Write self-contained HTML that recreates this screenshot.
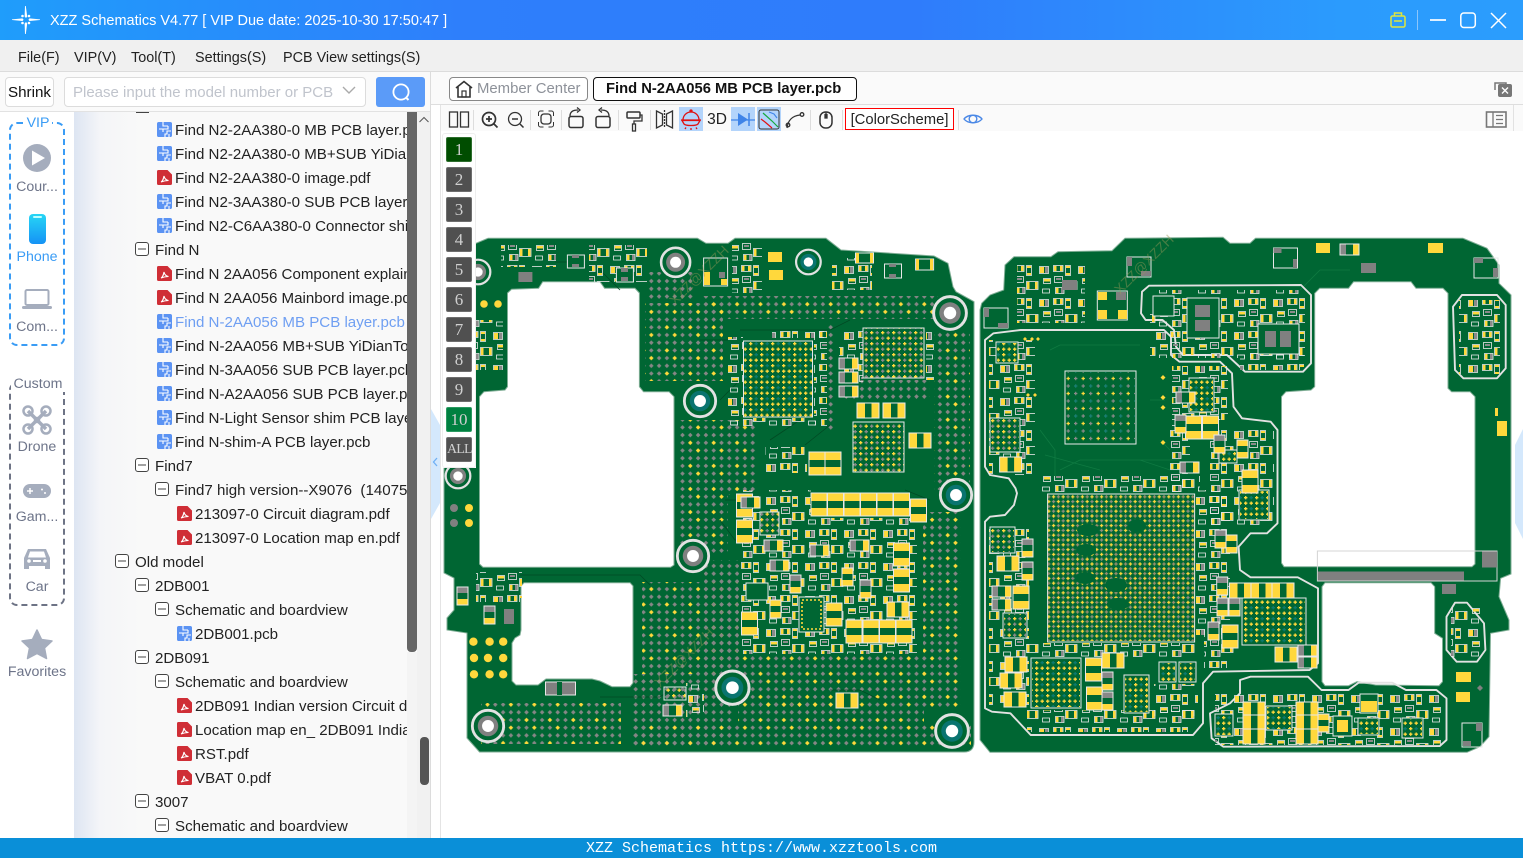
<!DOCTYPE html>
<html><head><meta charset="utf-8"><title>XZZ Schematics</title>
<style>
html,body{margin:0;padding:0;width:1523px;height:858px;overflow:hidden;background:#fff;font-family:"Liberation Sans","Noto Sans CJK SC",sans-serif;color:#222}
div{box-sizing:border-box}
.a{position:absolute}
#title{left:0;top:0;width:1523px;height:40px;background:linear-gradient(90deg,#1f9dfb 0,#2e7ffb 30%,#2f7cfb 60%,#2b9bfd 88%,#2b9dfd 100%);color:#fff;font-size:14.5px;line-height:42px;padding-left:50px}
#menu{left:0;top:40px;width:1523px;height:32px;background:#f0f0f0;border-bottom:1px solid #dcdcdc}
#menu span{position:absolute;top:0;line-height:36px;font-size:14.4px;color:#222}
#left{left:0;top:72px;width:431px;height:40px;background:#fafafa;border-bottom:1px solid #e2e2e2;border-right:1px solid #e0e0e0}
.btn{background:#fff;border:1px solid #dcdcdc;border-radius:4px}
#tree{left:0;top:112px;width:407px;height:726px;overflow:hidden;background:linear-gradient(90deg,#fff 0,#fff 74px,#dde5f2 74px,#f4f5f8 100px,#f9f9f9 140px)}
.r{position:absolute;height:24px;line-height:26px;white-space:nowrap;font-size:15.1px;color:#222}
.r svg{position:absolute;left:0;top:5px;width:15px;height:15px}
#side{left:0;top:112px;width:74px;height:726px;background:#fff}
.lab{position:absolute;left:0;width:74px;text-align:center;font-size:14.2px;line-height:20px;color:#6d7489}
#stat{left:0;top:838px;width:1523px;height:20px;background:#0a8fd8;color:#fff;font:15px/22px "Liberation Mono",monospace;text-align:center}
.lay{position:absolute;left:446px;width:26px;height:25px;background:#505050;border:1px solid #6e6e6e;border-radius:2px;color:#cfcfcf;font:17px/24px "Liberation Serif",serif;text-align:center}
.sep{position:absolute;top:110px;width:1px;height:20px;background:#ddd}
</style></head><body>

<svg class="a" style="left:0;top:0" width="1523" height="858" viewBox="0 0 1523 858">
<defs>
<pattern id="vg" width="7.8" height="7.7" patternUnits="userSpaceOnUse"><path d="M3.9 1.6l2.3 2.3-2.3 2.3-2.3-2.3z" fill="#868686"/></pattern>
<pattern id="vm" width="23.4" height="23.1" patternUnits="userSpaceOnUse"><g fill="#868686"><path d="M3.9 1.6l2.3 2.3-2.3 2.3-2.3-2.3z"/><path d="M19.5 1.6l2.3 2.3-2.3 2.3-2.3-2.3z"/><path d="M11.7 9.3l2.3 2.3-2.3 2.3-2.3-2.3z"/><path d="M3.9 17l2.3 2.3-2.3 2.3-2.3-2.3z"/><path d="M11.7 17l2.3 2.3-2.3 2.3-2.3-2.3z"/><path d="M3.9 9.300l2.3 2.3-2.3 2.3-2.3-2.3z"/><path d="M19.5 17l2.3 2.3-2.3 2.3-2.3-2.3z"/></g><g fill="#ffd83c"><path d="M11.7 1.6l2.3 2.3-2.3 2.3-2.3-2.3z"/><path d="M19.5 9.3l2.3 2.3-2.3 2.3-2.3-2.3z"/></g></pattern>
<pattern id="vy" width="15.6" height="7.7" patternUnits="userSpaceOnUse"><path d="M3.9 1.6l2.3 2.3-2.3 2.3-2.3-2.3z" fill="#ffd83c"/><path d="M11.7 1.6l2.3 2.3-2.3 2.3-2.3-2.3z" fill="#868686"/></pattern>
<pattern id="bga" width="11" height="11" patternUnits="userSpaceOnUse"><g stroke-width="1.3" fill="none"><path d="M1 2.7h3.4M2.7 1v3.4M6.5 8.2h3.4M8.2 6.5v3.4" stroke="#ffd83c"/><path d="M6.5 2.7h3.4M8.2 1v3.4" stroke="#0b7a70"/><path d="M1 8.2h3.4M2.7 6.5v3.4" stroke="#ffd83c"/></g></pattern>
<pattern id="bgb" width="11" height="11" patternUnits="userSpaceOnUse"><g stroke-width="1.3" fill="none"><path d="M1 2.7h3.4M2.7 1v3.4M6.5 8.2h3.4M8.2 6.5v3.4" stroke="#ffd83c"/><path d="M6.5 2.7h3.4M8.2 1v3.4" stroke="#8a8a8a"/><path d="M1 8.2h3.4M2.7 6.5v3.4" stroke="#8a8a8a"/></g></pattern>
<pattern id="bgm" width="9.6" height="9.6" patternUnits="userSpaceOnUse"><g stroke-width="1.3" fill="none"><path d="M.7 2.4h3.4M2.4.7v3.4" stroke="#ffd83c"/><path d="M5.5 2.4h3.4M7.2.7v3.4" stroke="#8f8f80"/><path d="M.7 7.2h3.4M2.4 5.5v3.4" stroke="#9a8f70"/><path d="M5.5 7.2h3.4M7.2 5.5v3.4" stroke="#ffd83c"/></g></pattern>
<pattern id="bgs" width="15" height="15" patternUnits="userSpaceOnUse"><g stroke-width="1.2" fill="none"><path d="M1.5 3.5h3.4M3.2 1.8v3.4" stroke="#ffd83c"/><path d="M9 3.5h3.4M10.7 1.8v3.4" stroke="#8a8a8a"/><path d="M1.5 11h3.4M3.2 9.3v3.4" stroke="#8a8a8a"/><path d="M9 11h3.4M10.7 9.3v3.4" stroke="#1a7f74"/></g></pattern>
<pattern id="smd" width="39" height="33" patternUnits="userSpaceOnUse">
<g fill="#ffd83c"><rect x="1" y="2" width="2.5" height="5"/><rect x="7" y="2" width="2.5" height="5"/><rect x="13" y="2" width="4" height="2"/><rect x="13" y="9" width="4" height="2"/><rect x="26" y="3" width="4" height="6"/><rect x="13" y="18" width="2.500" height="7"/><rect x="21" y="18" width="2.500" height="7"/><rect x="30" y="15" width="6" height="2.500"/><rect x="3" y="24" width="2.500" height="5"/></g>
<g fill="#8a8a8a"><rect x="31" y="3" width="3" height="6"/><rect x="8" y="24" width="2.500" height="5"/><rect x="3" y="14" width="5" height="2"/></g>
<g fill="none" stroke="#e8e8e8" stroke-width=".8"><rect x=".5" y="1.500" width="9.500" height="6"/><rect x="12.500" y="1.500" width="5" height="10"/><rect x="25.500" y="2.500" width="9" height="7"/><rect x="1.500" y="12.500" width="8" height="6"/><rect x="12.500" y="17.500" width="11.500" height="8"/><rect x="29.500" y="14.500" width="7" height="5"/><rect x="2.500" y="23.500" width="8.500" height="6"/><rect x="28.500" y="25" width="7" height="4"/></g>
</pattern>
<g id="cV"><rect width="16" height="23" fill="#ffd83c"/><rect y="8" width="16" height="7" fill="#063"/><rect width="16" height="23" fill="none" stroke="#e8e8e8"/></g>
<g id="cH"><rect width="22" height="15" fill="#ffd83c"/><rect x="8" width="6.5" height="15" fill="#063"/><rect width="22" height="15" fill="none" stroke="#e8e8e8"/></g>
<g id="gH"><rect width="19" height="11" fill="#063"/><rect width="6" height="11" fill="#888"/><rect x="13" width="6" height="11" fill="#ffd83c"/><rect width="19" height="11" fill="none" stroke="#e8e8e8"/></g>
<g id="gV"><rect width="11" height="18" fill="#063"/><rect width="11" height="6" fill="#888"/><rect y="12" width="11" height="6" fill="#ffd83c"/><rect width="11" height="18" fill="none" stroke="#e8e8e8"/></g>
<g id="yV"><rect width="11" height="18" fill="#ffd83c"/><rect y="6" width="11" height="6" fill="#063"/><rect width="11" height="18" fill="none" stroke="#e8e8e8"/></g>
<g id="hG"><circle r="14.5" fill="#063" stroke="#e2e2e2" stroke-width="2.6"/><circle r="9.5" fill="#808080"/><circle r="5.5" fill="#fff"/></g>
<g id="hT"><circle r="14.5" fill="#063" stroke="#e2e2e2" stroke-width="2.6"/><circle r="9.5" fill="#0a7470"/><circle r="5.5" fill="#fff"/></g>
<g id="ol"><rect width="24" height="20" fill="none" stroke="#e8e8e8"/></g>
<clipPath id="c1"><rect x="476" y="130" width="500" height="340"/><rect x="440" y="468" width="540" height="300"/></clipPath>
</defs>

<g clip-path="url(#c1)">
<path fill="#063" stroke="#7fae95" stroke-width="1" fill-rule="evenodd" d="M444 260Q446 250 476 243.3L488 238.3H697.5L706 243.3H728L735 238.3H826L841 250L934 256L948 263.3L953 286.7L956 291.7L974 301.7V742Q974 752 964 752H479.5L467 738V633L447 630V618L454 610V578L444 573Z
M507.5 293L511.6 289.3L538.6 288.3L542.7 281.7H600L604.6 288.3H635L639.4 293V386.7L643.5 391.7H669L674 396.7V565L670.5 567.3H483L479.5 564V396.7L484 391.7L505 390L507.5 386.7Z
M524 582.7H630L633 586V683L630 686.7H612L600 681L592 679H546L538 685H516L512 681V643L515 638L520 635L521 630V586Z"/>
</g>
<g>
<rect x="645" y="303" width="78" height="78" fill="url(#vm)"/>
<rect x="648" y="272" width="46" height="30" fill="url(#vg)"/>
<rect x="701" y="296" width="237" height="23" fill="url(#vm)"/>
<rect x="934" y="330" width="36" height="160" fill="url(#vm)"/>
<rect x="923" y="512" width="38" height="195" fill="url(#vm)"/>
<rect x="826" y="322" width="8" height="110" fill="url(#vg)"/>
<rect x="680" y="420" width="78" height="75" fill="url(#vm)"/>
<rect x="680" y="493" width="48" height="60" fill="url(#vm)"/>
<rect x="642" y="582" width="96" height="92" fill="url(#vm)"/>
<rect x="633" y="674" width="100" height="72" fill="url(#vg)"/>
<rect x="704" y="560" width="35" height="120" fill="url(#vg)"/>
<rect x="738" y="655" width="186" height="68" fill="url(#vm)"/>
<rect x="633" y="723" width="338" height="23" fill="url(#vm)"/>
<rect x="481" y="703" width="140" height="41" fill="url(#vm)"/>
<rect x="840" y="380" width="90" height="20" fill="url(#vg)"/>
<rect x="760" y="700" width="100" height="8" fill="url(#vy)"/>
</g>
<g fill="none" stroke="#004a24" stroke-width=".8"><path d="M520 575H640L650 585M600 697H660L670 690M720 520L735 540H745M725 500H736M770 440L800 420M805 445L830 425M600 270L620 290M555 262H570M700 340H728M720 400L740 380M740 330H830L850 320M905 490L930 500M905 640V600M830 690H860L880 700M500 650L510 660"/></g>
<use href="#hG" transform="translate(675.6 262.3)"/>
<use href="#hT" transform="translate(808.4 262) scale(.85)"/>
<use href="#hG" transform="translate(950 313) scale(1.13)"/>
<use href="#hT" transform="translate(700 401) scale(1.08)"/>
<use href="#hG" transform="translate(478 272) scale(.85)"/>
<use href="#hG" transform="translate(458 476) scale(.85)"/>
<use href="#hG" transform="translate(693 556) scale(1.08)"/>
<use href="#hT" transform="translate(956 495) scale(1.08)"/>
<use href="#hT" transform="translate(732.4 687.7) scale(1.15)"/>
<use href="#hG" transform="translate(488 726) scale(1.08)"/>
<use href="#hT" transform="translate(952 731) scale(1.13)"/>
<g fill="#ffd83c"><circle cx="484" cy="304" r="3.8"/><circle cx="498" cy="304" r="3.8"/><circle cx="469" cy="508" r="4"/><circle cx="469" cy="523" r="4"/><circle cx="473.4" cy="641.7" r="4.2"/><circle cx="489.6" cy="641.7" r="4.2"/><circle cx="503.2" cy="641.7" r="4.2"/><circle cx="474" cy="658" r="4.2"/><circle cx="488" cy="658" r="4.2"/><circle cx="503.2" cy="658" r="4.2"/><circle cx="474" cy="674.3" r="4.2"/><circle cx="489.6" cy="674.3" r="4.2"/><circle cx="503.2" cy="674.3" r="4.2"/></g>
<circle cx="454" cy="508" r="4" fill="#808080"/><circle cx="454" cy="523" r="4" fill="#808080"/>
<g>
<rect x="501" y="245" width="55" height="22" fill="url(#smd)"/>
<rect x="589" y="245" width="58" height="37" fill="url(#smd)"/>
<rect x="732" y="243" width="30" height="50" fill="url(#smd)"/>
<rect x="832" y="258" width="40" height="32" fill="url(#smd)"/>
<rect x="476" y="320" width="27" height="50" fill="url(#smd)"/>
<rect x="728" y="337" width="15" height="92" fill="url(#smd)"/>
<rect x="814" y="330" width="13" height="100" fill="url(#smd)"/>
<rect x="731" y="418" width="86" height="11" fill="url(#smd)"/>
<rect x="772" y="328" width="52" height="10" fill="url(#smd)"/>
<rect x="839" y="327" width="24" height="56" fill="url(#smd)"/>
<rect x="926" y="328" width="9" height="52" fill="url(#smd)"/>
<rect x="765" y="447" width="42" height="26" fill="url(#smd)"/>
<rect x="741" y="518" width="176" height="136" fill="url(#smd)"/>
<rect x="741" y="490" width="70" height="30" fill="url(#smd)"/>
<rect x="476" y="572" width="46" height="30" fill="url(#smd)"/>
<rect x="686" y="683" width="18" height="34" fill="url(#smd)"/>
<rect x="743.5" y="341" width="69" height="76" fill="#063"/><rect x="743.5" y="341" width="69" height="76" fill="url(#bga)" stroke="#e8e8e8"/>
<rect x="863" y="328" width="61" height="50" fill="#063"/><rect x="863" y="328" width="61" height="50" fill="url(#bgb)" stroke="#e8e8e8"/>
<rect x="853" y="422" width="51" height="50" fill="#063"/><rect x="853" y="422" width="51" height="50" fill="url(#bgb)" stroke="#e8e8e8"/>
<rect x="760" y="512" width="19" height="23" fill="#063"/><rect x="760" y="512" width="19" height="23" fill="url(#bgb)" stroke="#e8e8e8"/>
<rect x="799" y="597" width="25" height="35" fill="#063" stroke="#e8e8e8"/><rect x="802" y="600" width="19" height="29" fill="none" stroke="#ffd83c" stroke-width="1.6" stroke-dasharray="2 2"/>
<rect x="664" y="687" width="22" height="13" fill="url(#bgb)" stroke="#e8e8e8"/>
<rect x="746" y="583" width="22" height="17" fill="#063" stroke="#e8e8e8"/>
</g>
<g>
<use href="#cV" x="811" y="493"/><use href="#cV" x="827.5" y="493"/><use href="#cV" x="844" y="493"/><use href="#cV" x="860.5" y="493"/><use href="#cV" x="877" y="493"/><use href="#cV" x="893.5" y="493"/><use href="#cV" x="910.5" y="499"/>
<use href="#cV" x="736.5" y="494"/><use href="#cV" x="736.5" y="520"/>
<use href="#cV" x="893.5" y="543"/><use href="#cV" x="893.5" y="569"/>
<use href="#cV" x="846" y="620"/><use href="#cV" x="863" y="620"/><use href="#cV" x="879.5" y="620"/><use href="#cV" x="896" y="620"/>
<use href="#cV" x="741.5" y="612"/><use href="#cV" x="826" y="603"/>
<use href="#cH" x="887" y="602"/><use href="#cH" x="836" y="693"/>
<use href="#cH" x="857" y="403"/><use href="#cH" x="883" y="403"/><use href="#cH" x="909" y="433"/>
<use href="#cV" x="809" y="452"/><use href="#cV" x="825" y="452"/>
<use href="#gH" x="839" y="358"/><use href="#gH" x="839" y="372"/><use href="#gH" x="839" y="386"/>
<use href="#gH" x="663" y="705"/><use href="#gH" x="741" y="497"/>
<use href="#gH" x="764" y="540"/><use href="#gH" x="770" y="560"/><use href="#gH" x="810" y="545"/><use href="#gH" x="850" y="540"/><use href="#gV" x="790" y="575"/><use href="#gV" x="860" y="580"/><use href="#yV" x="770" y="600"/><use href="#yV" x="842" y="568"/>
<use href="#gV" x="484" y="606"/><use href="#gV" x="457" y="587"/>
</g>
<rect x="545.5" y="682" width="30" height="13" fill="#808080" stroke="#e8e8e8"/><rect x="557" y="682" width="5" height="13" fill="#063"/>
<rect x="504" y="609" width="10" height="15" fill="#808080"/>
<rect x="518.4" y="272" width="14" height="10" fill="#808080"/>
<rect x="768" y="252" width="14" height="10" fill="#ffd83c"/><rect x="769" y="270" width="14" height="10" fill="#ffd83c"/>
<g fill="#063" stroke="#e8e8e8"><rect x="703.6" y="258" width="24" height="28"/><rect x="855.5" y="253" width="18" height="10"/><rect x="915.6" y="259" width="18" height="11"/><rect x="884.5" y="264" width="17" height="14"/><rect x="616.4" y="268" width="17" height="14"/><rect x="567.4" y="255" width="17" height="13"/></g>
<g fill="#ffd83c"><rect x="704" y="272" width="6" height="13"/><rect x="721" y="279" width="6" height="6"/><rect x="856" y="253" width="3" height="10"/><rect x="870" y="253" width="3" height="10"/><rect x="916" y="259" width="3" height="11"/><rect x="930" y="259" width="3" height="11"/></g>
<g fill="#808080"><rect x="719" y="272" width="6" height="6"/><rect x="889" y="264" width="7" height="3"/><rect x="889" y="274" width="7" height="4"/><rect x="621" y="268" width="7" height="4"/><rect x="621" y="277" width="7" height="4"/><rect x="572" y="255" width="7" height="3"/><rect x="572" y="264" width="7" height="3"/></g>

<path fill="#063" stroke="#7fae95" stroke-width="1" fill-rule="evenodd" d="M980 310L981.7 303.3L990 295L1003.7 290L1005 265L1014 256.7H1051L1058 251.7L1112 250.7L1125 238.3L1223 237.3L1230 243.3H1250L1255.5 238.3H1463L1487 248.3L1499 265V283.3L1511 295V574L1500.6 578.3L1499 596.7L1509 620V630L1490.5 633.3L1489 736.7L1480 746.7L1467 752.3H990L980 740Z
M1314.7 293.3L1319.7 288.3H1348.5L1353.6 281.7H1411L1416 288.3H1443L1448 293.3V388.3L1451.6 391.7H1470L1475 396.7V564L1472 566.7H1284L1281.5 563V396.7L1286 391.7L1311 390L1314.7 386.7Z
M1325 582.7H1431L1434.7 586.7V633.3L1442.5 638.3V681.7L1439 685.7L1375.5 685L1357 681.7L1348.5 685.7H1325L1322 681.7V586.7Z"/>
<g fill="none" stroke="#0f7a42" stroke-width=".8"><path d="M1050 350L1060 345H1140M1040 430L1055 450V480M1140 460L1170 470H1200M1060 470L1080 460H1180M1045 455L1100 470M1300 290L1320 270H1350M1150 400H1165M1160 440L1170 450"/></g>
<g fill="none" stroke="#e2e2e2" stroke-width="1.9" stroke-linejoin="round">
<path d="M985 340V466.7L990 475L1008.7 478.3L1015.5 488.3L1017 493.3L1014 505L1005 515L990 516.7L985 521.7V708.3L992 711.7L1010.4 713.3L1030.7 735H1193L1203 723.3V683.3L1213 671.7L1309.6 670L1318 663.3V588.3L1297.8 577.3H1250.5L1240 570L1238.6 546.7L1250.5 533.3H1267L1277.5 523.3V430L1270.7 421.7L1242 418.3L1233.5 406.7L1232 373.3L1220 361.7H1179.5L1171 355V336.7L1164 330H1020.6L993.5 333.3Z"/>
<path d="M1142 291.7L1149 285.7L1301 285L1311 295V363.3L1303 371.7H1245L1227 355H1183L1176 346.7L1174 330L1162.5 320H1145.6L1141 313.3Z"/>
<path d="M1240 680L1250.5 676.7H1308L1321.5 690H1348.5L1358.6 682.7H1392.4L1406 690H1436.4L1446.5 698.3V740L1439.8 746L1223.4 746.7L1211.6 738.3L1210 713.3L1230 703.3L1240 693.3Z"/>
<path d="M1453 306.7L1462 295H1497L1505.7 305V368.3L1497 378.3H1463.4L1455 370Z"/>
<path d="M1446.5 616.7L1455 602.7H1467L1484 623.3L1485.4 650L1477 661.7H1456.7L1446.5 650Z"/>
</g>
<g>
<rect x="1017" y="265" width="68" height="58" fill="url(#smd)"/>
<rect x="1150" y="290" width="155" height="68" fill="url(#smd)"/>
<rect x="1240" y="350" width="64" height="20" fill="url(#smd)"/>
<rect x="1459" y="300" width="41" height="74" fill="url(#smd)"/>
<rect x="989" y="340" width="46" height="135" fill="url(#smd)"/>
<rect x="1172" y="366" width="56" height="54" fill="url(#smd)"/>
<rect x="1210" y="428" width="64" height="100" fill="url(#smd)"/>
<rect x="1040" y="476" width="160" height="17" fill="url(#smd)"/>
<rect x="1170" y="425" width="20" height="70" fill="url(#smd)"/>
<rect x="989" y="525" width="40" height="180" fill="url(#smd)"/>
<rect x="1027" y="643" width="170" height="15" fill="url(#smd)"/>
<rect x="1027" y="710" width="168" height="22" fill="url(#smd)"/>
<rect x="1154" y="684" width="44" height="32" fill="url(#smd)"/>
<rect x="1196" y="490" width="34" height="145" fill="url(#smd)"/>
<rect x="1204" y="628" width="30" height="40" fill="url(#smd)"/>
<rect x="1215" y="693" width="226" height="52" fill="url(#smd)"/>
<rect x="1451" y="608" width="30" height="50" fill="url(#smd)"/>
</g>
<g fill="#063" stroke="#e8e8e8">
<rect x="1047.6" y="494" width="147" height="148"/>
<rect x="1065" y="371" width="71" height="73"/>
<rect x="996" y="342" width="22" height="21"/><rect x="990" y="418" width="30" height="34"/>
<rect x="1189" y="378" width="25" height="34"/><rect x="1219" y="450" width="18" height="13"/><rect x="1239" y="490" width="30" height="30"/>
<rect x="990" y="527" width="25" height="26"/><rect x="1003" y="613" width="24" height="25"/><rect x="1031" y="658" width="50" height="50"/><rect x="1124" y="675" width="25" height="38"/>
<rect x="1159" y="662" width="17" height="20"/><rect x="1179" y="662" width="17" height="20"/><rect x="1242" y="598" width="64" height="47"/>
<rect x="1266" y="706" width="26" height="24"/><rect x="1358" y="718" width="21" height="17"/><rect x="1402" y="718" width="21" height="20"/><rect x="1215" y="714" width="18" height="22"/>
<rect x="1187" y="298" width="32" height="40"/><rect x="1258" y="324" width="41" height="30"/><rect x="1153" y="296" width="21" height="20"/>
</g>
<rect x="1048" y="494" width="146" height="147" fill="url(#bgm)"/>
<g fill="#063"><ellipse cx="1088" cy="530" rx="11" ry="6"/><ellipse cx="1137" cy="526" rx="9" ry="7"/><ellipse cx="1086" cy="550" rx="10" ry="6"/><ellipse cx="1116" cy="585" rx="11" ry="7"/><ellipse cx="1118" cy="604" rx="11" ry="6"/><ellipse cx="1085" cy="578" rx="10" ry="6"/></g>
<g><rect x="1066" y="372" width="69" height="71" fill="url(#bgs)"/>
<rect x="997" y="343" width="20" height="19" fill="url(#bga)"/><rect x="991" y="419" width="28" height="32" fill="url(#bgb)"/><rect x="1190" y="379" width="23" height="32" fill="url(#bga)"/><rect x="1220" y="451" width="16" height="11" fill="url(#bga)"/><rect x="1240" y="491" width="28" height="28" fill="url(#bga)"/>
<rect x="991" y="528" width="23" height="24" fill="url(#bgb)"/><rect x="1004" y="614" width="22" height="23" fill="url(#bgb)"/><rect x="1032" y="659" width="48" height="48" fill="url(#bga)"/><rect x="1125" y="676" width="23" height="36" fill="url(#bga)"/>
<rect x="1160" y="663" width="15" height="18" fill="url(#bga)"/><rect x="1180" y="663" width="15" height="18" fill="url(#bga)"/><rect x="1243" y="599" width="62" height="45" fill="url(#bga)"/>
<rect x="1267" y="707" width="24" height="22" fill="url(#bga)"/><rect x="1359" y="719" width="19" height="15" fill="url(#bga)"/><rect x="1403" y="719" width="19" height="18" fill="url(#bga)"/><rect x="1216" y="715" width="16" height="20" fill="url(#bga)"/></g>
<g fill="#808080"><rect x="1195" y="305" width="15" height="12"/><rect x="1195" y="320" width="15" height="11"/><rect x="1265" y="331" width="11" height="16"/><rect x="1280" y="331" width="11" height="16"/><rect x="1062" y="280" width="15" height="10"/><rect x="1361" y="263" width="15" height="10"/><rect x="1442" y="584" width="14" height="10"/></g>
<g fill="#ffd83c"><rect x="1316" y="243" width="14" height="10"/><rect x="1428" y="243" width="15" height="10"/><rect x="1456" y="672" width="15" height="10"/><rect x="1456" y="692" width="14" height="10"/><rect x="1497" y="421" width="10" height="15"/><rect x="1495" y="408" width="3" height="8"/></g>
<use href="#ol" x="1273.5" y="248"/><use href="#ol" x="1474" y="258"/><use href="#ol" x="1127" y="257"/><use href="#ol" x="984" y="308"/>
<g fill="#808080"><rect x="1273.5" y="248" width="8" height="5"/><rect x="1293" y="259" width="4" height="9"/><rect x="1474" y="258" width="9" height="5"/><rect x="1493" y="268" width="5" height="9"/><rect x="1127" y="257" width="5" height="9"/><rect x="1141" y="271" width="10" height="5"/><rect x="984" y="308" width="5" height="9"/><rect x="998" y="323" width="10" height="5"/></g>
<rect x="1097.3" y="291" width="30" height="29" fill="#063" stroke="#e8e8e8"/><g fill="#ffd83c"><rect x="1098" y="292" width="9" height="8"/><rect x="1098" y="310" width="9" height="9"/><rect x="1118" y="310" width="9" height="9"/></g><rect x="1116" y="292" width="10" height="8" fill="#808080"/>
<use href="#gH" x="1340" y="244"/>
<g>
<use href="#cV" x="1185.5" y="416"/><use href="#cV" x="1202.5" y="416"/>
<use href="#cH" x="999.6" y="457"/><use href="#cH" x="997" y="556"/><use href="#cH" x="1005" y="657"/><use href="#cH" x="1000" y="673"/><use href="#cH" x="1004" y="692"/><use href="#cH" x="1102" y="653"/><use href="#cH" x="1275" y="647"/>
<use href="#gV" x="1022" y="539"/><use href="#gV" x="1022" y="562"/><use href="#gH" x="992" y="586"/><use href="#gH" x="992" y="599"/>
<use href="#cV" x="1013" y="586"/><use href="#cV" x="1085.5" y="658"/><use href="#cV" x="1086.5" y="687"/>
<use href="#gV" x="1102" y="672"/><use href="#gV" x="1102" y="692"/>
<use href="#cH" x="1229.5" y="583"/><use href="#cH" x="1251" y="583"/><use href="#cH" x="1272" y="583"/>
<use href="#gV" x="1216.7" y="577"/><use href="#gV" x="1217" y="598"/><use href="#gV" x="1229" y="598"/><use href="#cV" x="1222" y="625"/><use href="#gV" x="1208" y="622"/>
<use href="#gH" x="1298" y="645"/><use href="#gH" x="1298" y="657"/>
<use href="#yV" x="1318" y="714"/>
<use href="#cH" x="1243" y="702"/><use href="#cH" x="1243" y="715"/><use href="#cH" x="1243" y="729"/><use href="#cH" x="1296" y="702"/><use href="#cH" x="1296" y="715"/><use href="#cH" x="1296" y="729"/>
<use href="#gH" x="1176" y="392"/><use href="#gV" x="1214" y="435"/><use href="#yV" x="1237" y="440"/><use href="#gH" x="1180" y="462"/><use href="#cV" x="1242" y="470"/>
<use href="#gV" x="1175" y="415"/><use href="#gV" x="1215" y="530"/><use href="#yV" x="1226" y="535"/>
</g>
<rect x="1333" y="716" width="19" height="20" fill="#063" stroke="#e8e8e8"/><rect x="1337" y="720" width="11" height="12" fill="#ffd83c"/>
<rect x="1360" y="694" width="18" height="19" fill="#063" stroke="#e8e8e8"/><rect x="1361" y="701" width="16" height="11" fill="#ffd83c"/>
<g fill="#ffd83c"><path d="M1163 375l2.5 2.5-2.5 2.5-2.5-2.5zM1163 395l2.5 2.5-2.5 2.5-2.5-2.5zM1163 405l2.5 2.5-2.5 2.5-2.5-2.5zM1163 440l2.5 2.5-2.5 2.5-2.5-2.5zM1025 337l2 2-2 2-2-2zM1032 337l2 2-2 2-2-2zM1038 337l2 2-2 2-2-2zM1028 393l2 2-2 2-2-2zM1035 393l2 2-2 2-2-2z"/></g>
<rect x="1462" y="723" width="20" height="24" fill="none" stroke="#e8e8e8"/><rect x="1476" y="723" width="6" height="8" fill="#808080"/><rect x="1463" y="741" width="8" height="5" fill="#808080"/>
<path d="M1480 685l3 3-3 3-3-3z" fill="#808080"/>
<rect x="1317.4" y="551" width="179.6" height="30" fill="none" stroke="#d4d4d4"/>
<rect x="1318" y="571.5" width="146" height="9" fill="#808080"/><rect x="1482" y="551.5" width="15" height="16" fill="#808080"/>
<g font-family="Liberation Sans,sans-serif" font-size="14" fill="#9a9a5a" opacity=".45">
<text transform="translate(675 306) rotate(-45)">XZZ@XZZH</text>
<text transform="translate(1120 295) rotate(-45)">XZZ@XZZH</text>
<text transform="translate(660 688) rotate(-45)">XZZ@XZZH</text>
</g>
</svg>

<div class="a" id="title">XZZ Schematics V4.77 [ VIP Due date: 2025-10-30 17:50:47 ]</div>
<svg class="a" style="left:10px;top:4px" width="32" height="32" viewBox="0 0 32 32"><path fill="#fff" d="M15 2h0.8L17.2 12.5 16 14 14.6 12.5zM15 30h0.8L17.2 19.5 16 18 14.6 19.5zM2 16v-.6L12.5 14.4 13.6 15.7 12.5 17zM30 16v-.6L19.5 14.4 18.4 15.7 19.5 17z"/><circle cx="12.5" cy="12" r="1.3" fill="#fff"/><circle cx="19" cy="12" r="1.3" fill="#fff"/><circle cx="12.5" cy="19" r="1.3" fill="#fff"/><circle cx="19" cy="19" r="1.3" fill="#fff"/></svg>
<svg class="a" style="left:1385px;top:8px" width="130" height="24" viewBox="1385 8 130 24"><g fill="none" stroke="#dfe63c" stroke-width="1.5"><rect x="1391" y="16" width="14" height="11" rx="1.5"/><path d="M1394.5 16v-3h7v3M1394 21h8"/></g><path d="M1417.5 10v20" stroke="#8cc6fb"/><path d="M1430 20h16" stroke="#fff" stroke-width="1.7"/><rect x="1460.8" y="13" width="14.5" height="14.5" rx="3" fill="none" stroke="#fff" stroke-width="1.5"/><path d="M1491 13l15 15M1506 13l-15 15" stroke="#fff" stroke-width="1.5"/></svg>

<div class="a" id="menu"><span style="left:18px">File(F)</span><span style="left:74px">VIP(V)</span><span style="left:131px">Tool(T)</span><span style="left:195px">Settings(S)</span><span style="left:283px">PCB View settings(S)</span></div>

<div class="a" id="left"></div>
<div class="a btn" style="left:5px;top:77px;width:49px;height:30px;font-size:15.2px;line-height:29px;text-align:center;color:#111">Shrink</div>
<div class="a btn" style="left:64px;top:77px;width:302px;height:30px;font-size:15px;line-height:30px;padding-left:8px;color:#c0c4cc">Please input the model number or PCB</div>
<svg class="a" style="left:341px;top:84px" width="16" height="14"><path d="M2 3l6 6 6-6" fill="none" stroke="#aaa" stroke-width="1.4"/></svg>
<div class="a" style="left:376px;top:77px;width:49px;height:30px;background:#5b9bf8;border-radius:3px"></div>
<svg class="a" style="left:389px;top:81px" width="24" height="22"><circle cx="12" cy="11" r="7.6" fill="none" stroke="#fff" stroke-width="1.8"/><path d="M17 16.5l2.5 2.5" stroke="#fff" stroke-width="2"/></svg>

<svg width="0" height="0" style="position:absolute"><defs>
<g id="pb"><rect width="15" height="15" rx="1.8" fill="#5b93f3"/><g fill="none" stroke="#fff" stroke-width="1.100"><path d="M6 0v4h5M11 4v3H6v3M2 7h4M14 9h-4v3H8v3M12 12v3"/></g></g>
<g id="pd"><path d="M1.5 0h9L15 4.5V13.5A1.5 1.5 0 0 1 13.5 15h-12A1.5 1.5 0 0 1 0 13.5V1.5A1.5 1.5 0 0 1 1.5 0z" fill="#cf2e36"/><path d="M4 12c2-1 2.500-3.500 3-6 .5 2.500 1.500 4 4.500 4.500-2.500 0-5 .5-7.500 1.500z" fill="none" stroke="#fff" stroke-width="1.100"/></g>
<g id="mn"><rect x=".5" y=".5" width="13" height="13" rx="2.5" fill="#fff" stroke="#444"/><path d="M3 7h8" stroke="#444"/></g>
</defs></svg>

<div class="a" id="tree">
<div class="a" style="left:136px;top:0;width:13px;height:1px;background:#444"></div>
<div class="r" style="left:157px;top:6px;padding-left:18px"><svg style="top:4px"><use href="#pb"/></svg>Find N2-2AA380-0 MB PCB layer.pcb</div>
<div class="r" style="left:157px;top:30px;padding-left:18px"><svg style="top:4px"><use href="#pb"/></svg>Find N2-2AA380-0 MB+SUB YiDianTong</div>
<div class="r" style="left:157px;top:54px;padding-left:18px"><svg style="top:4px"><use href="#pd"/></svg>Find N2-2AA380-0 image.pdf</div>
<div class="r" style="left:157px;top:78px;padding-left:18px"><svg style="top:4px"><use href="#pb"/></svg>Find N2-3AA380-0 SUB PCB layer.pcb</div>
<div class="r" style="left:157px;top:102px;padding-left:18px"><svg style="top:4px"><use href="#pb"/></svg>Find N2-C6AA380-0 Connector shield</div>
<div class="r" style="left:135px;top:126px;padding-left:20px"><svg style="top:4px"><use href="#mn"/></svg>Find N</div>
<div class="r" style="left:157px;top:150px;padding-left:18px"><svg style="top:4px"><use href="#pd"/></svg>Find N 2AA056 Component explain</div>
<div class="r" style="left:157px;top:174px;padding-left:18px"><svg style="top:4px"><use href="#pd"/></svg>Find N 2AA056 Mainbord image.pdf</div>
<div class="r" style="left:157px;top:198px;padding-left:18px;color:#6f9ff2"><svg style="top:4px"><use href="#pb"/></svg>Find N-2AA056 MB PCB layer.pcb</div>
<div class="r" style="left:157px;top:222px;padding-left:18px"><svg style="top:4px"><use href="#pb"/></svg>Find N-2AA056 MB+SUB YiDianTong</div>
<div class="r" style="left:157px;top:246px;padding-left:18px"><svg style="top:4px"><use href="#pb"/></svg>Find N-3AA056 SUB PCB layer.pcb</div>
<div class="r" style="left:157px;top:270px;padding-left:18px"><svg style="top:4px"><use href="#pb"/></svg>Find N-A2AA056 SUB PCB layer.pcb</div>
<div class="r" style="left:157px;top:294px;padding-left:18px"><svg style="top:4px"><use href="#pb"/></svg>Find N-Light Sensor shim PCB layer</div>
<div class="r" style="left:157px;top:318px;padding-left:18px"><svg style="top:4px"><use href="#pb"/></svg>Find N-shim-A PCB layer.pcb</div>
<div class="r" style="left:135px;top:342px;padding-left:20px"><svg style="top:4px"><use href="#mn"/></svg>Find7</div>
<div class="r" style="left:155px;top:366px;padding-left:20px"><svg style="top:4px"><use href="#mn"/></svg>Find7 high version--X9076 &nbsp;(140755</div>
<div class="r" style="left:177px;top:390px;padding-left:18px"><svg style="top:4px"><use href="#pd"/></svg>213097-0 Circuit diagram.pdf</div>
<div class="r" style="left:177px;top:414px;padding-left:18px"><svg style="top:4px"><use href="#pd"/></svg>213097-0 Location map en.pdf</div>
<div class="r" style="left:115px;top:438px;padding-left:20px"><svg style="top:4px"><use href="#mn"/></svg>Old model</div>
<div class="r" style="left:135px;top:462px;padding-left:20px"><svg style="top:4px"><use href="#mn"/></svg>2DB001</div>
<div class="r" style="left:155px;top:486px;padding-left:20px"><svg style="top:4px"><use href="#mn"/></svg>Schematic and boardview</div>
<div class="r" style="left:177px;top:510px;padding-left:18px"><svg style="top:4px"><use href="#pb"/></svg>2DB001.pcb</div>
<div class="r" style="left:135px;top:534px;padding-left:20px"><svg style="top:4px"><use href="#mn"/></svg>2DB091</div>
<div class="r" style="left:155px;top:558px;padding-left:20px"><svg style="top:4px"><use href="#mn"/></svg>Schematic and boardview</div>
<div class="r" style="left:177px;top:582px;padding-left:18px"><svg style="top:4px"><use href="#pd"/></svg>2DB091 Indian version Circuit diagram</div>
<div class="r" style="left:177px;top:606px;padding-left:18px"><svg style="top:4px"><use href="#pd"/></svg>Location map en_ 2DB091 Indian</div>
<div class="r" style="left:177px;top:630px;padding-left:18px"><svg style="top:4px"><use href="#pd"/></svg>RST.pdf</div>
<div class="r" style="left:177px;top:654px;padding-left:18px"><svg style="top:4px"><use href="#pd"/></svg>VBAT 0.pdf</div>
<div class="r" style="left:135px;top:678px;padding-left:20px"><svg style="top:4px"><use href="#mn"/></svg>3007</div>
<div class="r" style="left:155px;top:702px;padding-left:20px"><svg style="top:4px"><use href="#mn"/></svg>Schematic and boardview</div>
</div>

<div class="a" id="side">
<div class="a" style="left:9px;top:10px;width:56px;height:224px;border:2px dashed #3a9cf5;border-radius:8px"></div>
<div class="a" style="left:24px;top:1px;width:28px;height:18px;background:#fff;text-align:center;font-size:14.2px;line-height:20px;color:#3a9cf5">VIP</div>
<div class="a" style="left:9px;top:270px;width:56px;height:224px;border:2px dashed #6d7385;border-radius:8px"></div>
<div class="a" style="left:11px;top:262px;width:54px;height:18px;background:#fff;text-align:center;font-size:14.2px;line-height:20px;color:#6d7489">Custom</div>
<div class="lab" style="top:65px">Cour...</div>
<div class="lab" style="top:135px;color:#3a9cf5">Phone</div>
<div class="lab" style="top:205px">Com...</div>
<div class="lab" style="top:325px">Drone</div>
<div class="lab" style="top:395px">Gam...</div>
<div class="lab" style="top:465px">Car</div>
<div class="lab" style="top:550px">Favorites</div>
</div>
<svg class="a" style="left:0;top:112px" width="74" height="560" viewBox="0 112 74 560">
<defs><linearGradient id="ph" x1="0" y1="0" x2="0" y2="1"><stop offset="0" stop-color="#27d6f5"/><stop offset="1" stop-color="#1592f5"/></linearGradient></defs>
<circle cx="37" cy="158" r="14" fill="#a5adbd"/><path d="M32 150.500l13 7.500-13 7.500z" fill="#fff"/>
<rect x="29" y="214" width="17" height="30" rx="4" fill="url(#ph)"/><rect x="33" y="216" width="9" height="2" rx="1" fill="#bff"/>
<rect x="25.500" y="290" width="23" height="15" rx="1.500" fill="none" stroke="#a5adbd" stroke-width="2"/><rect x="22" y="306" width="30" height="3" rx="1.500" fill="#a5adbd"/>
<g stroke="#a5adbd" fill="none"><path d="M28 411l18 18M46 411l-18 18" stroke-width="3.500"/><circle cx="28" cy="411" r="4.500" stroke-width="2.500"/><circle cx="46" cy="411" r="4.500" stroke-width="2.500"/><circle cx="28" cy="429" r="4.500" stroke-width="2.500"/><circle cx="46" cy="429" r="4.500" stroke-width="2.500"/><circle cx="37" cy="420" r="2.500" stroke-width="1.500"/></g>
<rect x="23" y="484" width="28" height="14" rx="7" fill="#a5adbd"/><path d="M27 491h6M30 488v6" stroke="#fff" stroke-width="1.500"/><circle cx="42" cy="489.500" r="1" fill="#fff"/><circle cx="45" cy="493" r="1" fill="#fff"/>
<path d="M28 549h18l4 9v11h-5v-3H29v3h-5v-11z" fill="#a5adbd"/><path d="M30 551.500h14l2 6H28z" fill="#fff"/><circle cx="29" cy="561" r="1.800" fill="#fff"/><circle cx="45" cy="561" r="1.800" fill="#fff"/><rect x="33" y="560" width="8" height="2" fill="#fff"/>
<path d="M37 630l4.500 9.500 10.500 1.500-7.500 7 2 10.500-9.500-5-9.500 5 2-10.500-7.500-7 10.500-1.500z" fill="#a5adbd" stroke="#a5adbd" stroke-width="1.500" stroke-linejoin="round"/>
</svg>

<div class="a" style="left:407px;top:112px;width:10px;height:540px;background:#666;border-radius:0 0 4px 4px"></div>
<div class="a" style="left:407px;top:652px;width:10px;height:186px;background:#f4f4f4"></div>
<div class="a" style="left:417px;top:112px;width:13px;height:726px;background:#f1f1f1"></div>
<svg class="a" style="left:418px;top:115px" width="12" height="10"><path d="M1.500 7l4.500-4.500L10.500 7" fill="none" stroke="#555"/></svg>
<div class="a" style="left:420px;top:737px;width:9px;height:48px;background:#555;border-radius:4px"></div>
<div class="a" style="left:430px;top:72px;width:1px;height:766px;background:#dcdcdc"></div>
<div class="a" style="left:440px;top:105px;width:1px;height:733px;background:#e4e4e4"></div>
<svg class="a" style="left:431px;top:405px" width="10" height="120"><path d="M0 4L9 20V98L0 114Z" fill="#d4e8fc"/><path d="M6 53l-3.500 4 3.500 4" fill="none" stroke="#6fb0f5" stroke-width="1.300"/></svg>
<svg class="a" style="left:1513px;top:425px" width="10" height="120"><path d="M10 4L2 20V98L10 114Z" fill="#d4e8fc"/></svg>

<div class="a" style="left:431px;top:72px;width:1092px;height:33px;background:#fafafa;border-bottom:1px solid #dedede"></div>
<div class="a" style="left:441px;top:105px;width:1082px;height:26px;background:#fafafa"></div>
<div class="a" style="left:1513px;top:105px;width:1px;height:26px;background:#e2e2e2"></div>
<div class="a" style="left:449px;top:77px;width:139px;height:24px;border:1px solid #888;border-radius:4px;background:#fff;font-size:14.900px;line-height:23px;padding-left:27px;color:#8d9199">Member Center</div>
<div class="a" style="left:593px;top:77px;width:264px;height:24px;border:1px solid #111;border-radius:4px;background:#fff;font-size:14.750px;font-weight:bold;line-height:23px;padding-left:12px;color:#111">Find N-2AA056 MB PCB layer.pcb</div>
<div class="a" style="left:679px;top:107px;width:24px;height:24px;background:#b3d4fb"></div>
<div class="a" style="left:731px;top:107px;width:24px;height:24px;background:#b3d4fb"></div>
<div class="a" style="left:757px;top:107px;width:24px;height:24px;background:#b3d4fb"></div>
<div class="sep" style="left:473px"></div><div class="sep" style="left:530px"></div><div class="sep" style="left:561px"></div><div class="sep" style="left:618px"></div><div class="sep" style="left:650px"></div><div class="sep" style="left:810px"></div><div class="sep" style="left:842px"></div><div class="sep" style="left:958px"></div>
<div class="a" style="left:707px;top:107px;width:20px;height:24px;line-height:25px;font-size:15.500px;text-align:center;color:#222">3D</div>
<div class="a" style="left:845px;top:108px;width:109px;height:22px;border:1px solid #f00;background:#fff;font-size:14.800px;line-height:22px;text-align:center;color:#222">[ColorScheme]</div>
<svg class="a" style="left:441px;top:72px" width="1082" height="60" viewBox="441 72 1082 60">
<g fill="none" stroke="#333" stroke-width="1.300">
<path d="M456 88l8-6.500 8 6.500M458 87v10h12V87" stroke-width="1.600"/><rect x="462" y="91" width="4" height="6" stroke-width="1.200"/>
<rect x="449.500" y="112" width="8" height="15"/><rect x="460.500" y="112" width="8" height="15"/>
<circle cx="489" cy="119" r="6.500" stroke-width="1.700"/><path d="M494 124l3.500 3.500M486 119h6M489 116v6" stroke-width="1.700"/>
<circle cx="515" cy="119" r="6.500"/><path d="M520 124l3.500 3.500M512 119h6" stroke-width="1.500"/>
<rect x="541" y="114" width="10" height="10" rx="3"/><path d="M538.500 116v-3a2 2 0 0 1 2-2h3M548.500 111h3a2 2 0 0 1 2 2v3M553.500 122v3a2 2 0 0 1-2 2h-3M543.500 127h-3a2 2 0 0 1-2-2v-3" stroke-width="1"/>
<rect x="569" y="116.500" width="14" height="11" rx="2" stroke-width="1.500"/><path d="M570 116c0-4 3-6 8-6M577 107.500l3 2.500-3 2.500" stroke-width="1.300"/>
<rect x="596" y="116.500" width="14" height="11" rx="2" stroke-width="1.500"/><path d="M609 116c0-4-3-6-8-6M602 107.500l-3 2.500 3 2.500" stroke-width="1.300"/>
<rect x="627" y="112" width="13" height="6" rx="1" stroke-width="1.500"/><path d="M640 115h2v6h-8v3"/><rect x="632.500" y="124" width="3" height="7"/>
<path d="M656.500 113l6 3v11l-6 3zM672.500 113l-6 3v11l6 3z" transform="translate(0 -2)"/><path d="M664.500 110v18" stroke-dasharray="2 1"/>
<rect x="820" y="112" width="12" height="16" rx="5.500" stroke-width="1.500"/><path d="M826 112v5"/><rect x="825" y="114.500" width="2" height="3.500" fill="#333"/>
<path d="M787 128c1-8 5-12 13-13"/><circle cx="788" cy="125" r="1.800"/><circle cx="802" cy="114.500" r="1.800"/>
</g>
<g fill="none" stroke="#e01010" stroke-width="1.300"><path d="M683 120a8 8 0 0 1 16 0"/><path d="M681 120h20M684 124c2 2 12 2 14 0l2-3.500H682z"/><circle cx="691" cy="111" r="1" fill="#e01010"/><path d="M686 127.500l-1 1.500M691 128v2M696 127.500l1 1.500"/></g>
<g><path d="M731 120h24" stroke="#3f84e8" stroke-width="1.300"/><path d="M738 113l10 6.500-10 6.500z" fill="#3f84e8"/><path d="M749 113v13" stroke="#3f84e8" stroke-width="1.500"/></g>
<rect x="759" y="110" width="20" height="19" rx="2" fill="none" stroke="#333"/><path d="M761 119l4 3 7 6" fill="none" stroke="#e01010" stroke-width="1.200"/><path d="M763 113l9 8 6 6" fill="none" stroke="#15a83c" stroke-width="1.200"/><path d="M769 112l5 2 3 4" fill="none" stroke="#3f84e8" stroke-width="1.100"/>
<g fill="none" stroke="#4a88e6" stroke-width="1.400"><path d="M964 119c4-5 14-5 18 0-4 5-14 5-18 0z"/><circle cx="973" cy="119" r="3.800"/></g>
<g fill="none" stroke="#777"><path d="M1495 90v-7h11v3" stroke-width="1.500"/></g><rect x="1498" y="84" width="14" height="13" rx="2" fill="#777"/><path d="M1502 87.500l6 6M1508 87.500l-6 6" stroke="#fff" stroke-width="1.400"/>
<rect x="1486.500" y="112" width="19.500" height="15" fill="none" stroke="#777" stroke-width="1.600"/><path d="M1493 112v15M1496 115.500h7M1496 119.500h7M1496 123.500h7" stroke="#777" stroke-width="1.300"/>
</svg>

<div class="a" style="left:442px;top:133px;width:34px;height:335px;background:#fff;border:1px solid #eee;border-radius:3px"></div>
<div class="lay" style="top:137px;background:#004d00;border-color:#2d6e2d">1</div>
<div class="lay" style="top:167px">2</div>
<div class="lay" style="top:197px">3</div>
<div class="lay" style="top:227px">4</div>
<div class="lay" style="top:257px">5</div>
<div class="lay" style="top:287px">6</div>
<div class="lay" style="top:317px">7</div>
<div class="lay" style="top:347px">8</div>
<div class="lay" style="top:377px">9</div>
<div class="lay" style="top:407px;background:#008040;border-color:#2a9a60">10</div>
<div class="lay" style="top:437px;font-size:14px;letter-spacing:-.8px">ALL</div>

<div class="a" id="stat">XZZ Schematics https://www.xzztools.com</div>
</body></html>
